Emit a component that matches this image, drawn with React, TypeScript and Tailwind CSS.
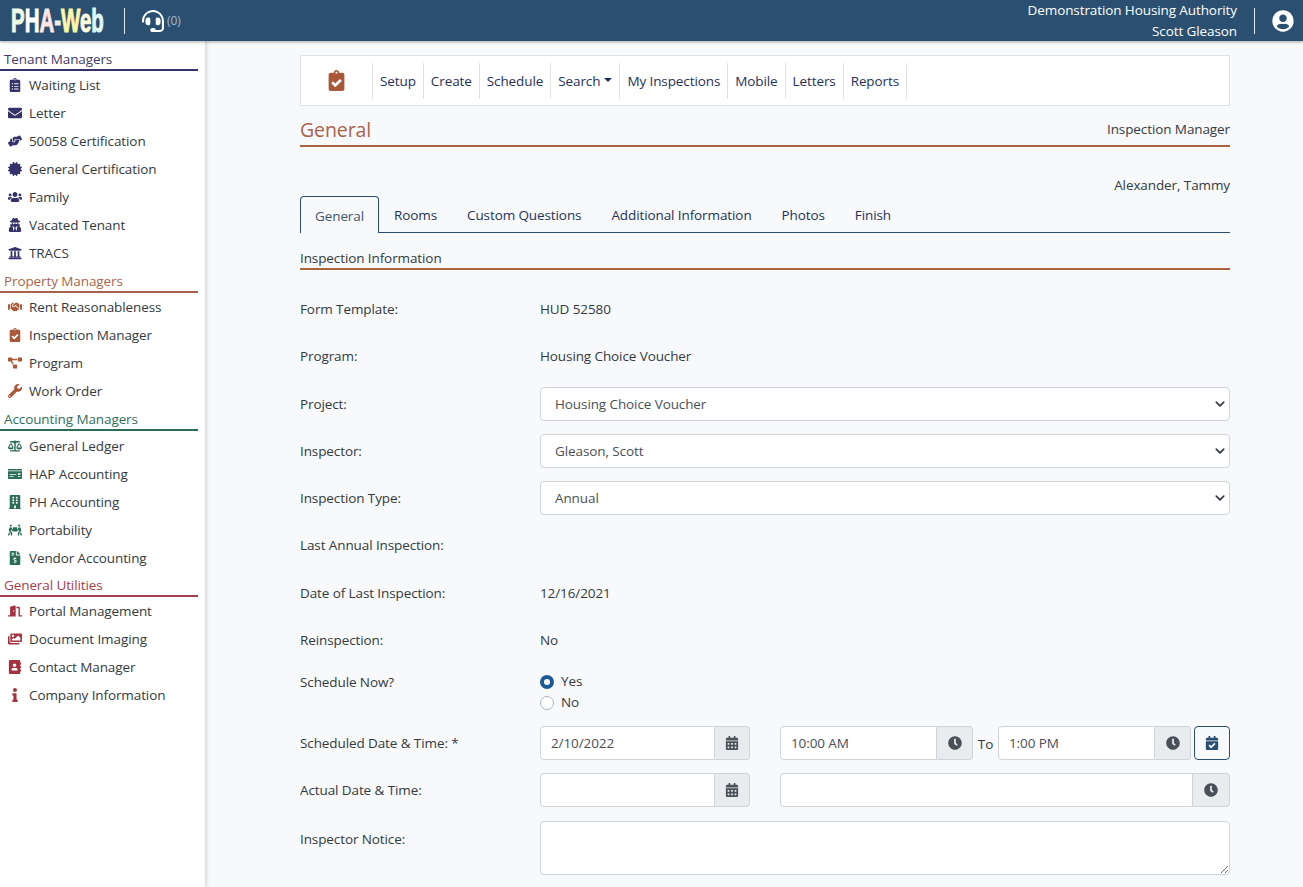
import React from 'react';
import {
  FaAddressBook,
  FaBalanceScale,
  FaBuilding,
  FaCalendarAlt,
  FaCalendarCheck,
  FaCertificate,
  FaClipboardCheck,
  FaClipboardList,
  FaClock,
  FaDoorOpen,
  FaEnvelope,
  FaFileInvoiceDollar,
  FaHandshake,
  FaHandsHelping,
  FaHeadset,
  FaImages,
  FaInfo,
  FaMoneyCheck,
  FaPeopleCarry,
  FaProjectDiagram,
  FaUniversity,
  FaUserCircle,
  FaUserSecret,
  FaUsers,
  FaWrench,
} from 'react-icons/fa';

const sections = [
  {
    title: 'Tenant Managers',
    titleClass: 'text-[#3f3a6b]',
    lineClass: 'border-[#35316a]',
    iconClass: 'text-[#35316a]',
    listClass: 'pb-[5px]',
    items: [
      { label: 'Waiting List', icon: FaClipboardList },
      { label: 'Letter', icon: FaEnvelope },
      { label: '50058 Certification', icon: FaHandsHelping },
      { label: 'General Certification', icon: FaCertificate },
      { label: 'Family', icon: FaUsers },
      { label: 'Vacated Tenant', icon: FaUserSecret },
      { label: 'TRACS', icon: FaUniversity },
    ],
  },
  {
    title: 'Property Managers',
    titleClass: 'text-[#a9634a]',
    lineClass: 'border-[#a9634a]',
    iconClass: 'text-[#a9583a]',
    listClass: 'pb-[5px]',
    items: [
      { label: 'Rent Reasonableness', icon: FaHandshake },
      { label: 'Inspection Manager', icon: FaClipboardCheck },
      { label: 'Program', icon: FaProjectDiagram },
      { label: 'Work Order', icon: FaWrench },
    ],
  },
  {
    title: 'Accounting Managers',
    titleClass: 'text-[#2f6f5c]',
    lineClass: 'border-[#2b6e58]',
    iconClass: 'text-[#2b6e58]',
    listClass: 'pt-[1px] pb-[4px]',
    items: [
      { label: 'General Ledger', icon: FaBalanceScale },
      { label: 'HAP Accounting', icon: FaMoneyCheck },
      { label: 'PH Accounting', icon: FaBuilding },
      { label: 'Portability', icon: FaPeopleCarry },
      { label: 'Vendor Accounting', icon: FaFileInvoiceDollar },
    ],
  },
  {
    title: 'General Utilities',
    titleClass: 'text-[#a03f4b]',
    lineClass: 'border-[#a03f4b]',
    iconClass: 'text-[#a5323f]',
    listClass: '',
    items: [
      { label: 'Portal Management', icon: FaDoorOpen },
      { label: 'Document Imaging', icon: FaImages },
      { label: 'Contact Manager', icon: FaAddressBook },
      { label: 'Company Information', icon: FaInfo },
    ],
  },
];

const logoLetters = [
  { ch: 'P', cls: 'text-[#ecffe4]' },
  { ch: 'H', cls: 'text-white' },
  { ch: 'A', cls: 'text-[#ffe6e6]' },
  { ch: '-', cls: 'text-[#eeeeee]' },
  { ch: 'W', cls: 'text-[#fff7a8]' },
  { ch: 'e', cls: 'text-[#fffde0]' },
  { ch: 'b', cls: 'text-[#dffbff]' },
];

const inputClass =
  'h-[34px] min-w-0 flex-1 rounded-l-[4px] border border-[#ced4da] bg-white px-[10px] text-[13.5px] text-[#495057]';

function Select({ value }: { value: string }) {
  return (
    <div className="flex h-[34px] items-center justify-between rounded-[4px] border border-[#ced4da] bg-white pl-[14px] pr-[4px] text-[#495057]">
      <span>{value}</span>
      <svg width="10" height="10" viewBox="0 0 16 16">
        <path d="M2 5l6 6 6-6" fill="none" stroke="#343a40" strokeWidth="2.6" strokeLinecap="round" strokeLinejoin="round" />
      </svg>
    </div>
  );
}

function Addon({ clock, width }: { clock?: boolean; width: string }) {
  return (
    <div className={`flex h-[34px] items-center justify-center rounded-r-[4px] border border-l-0 border-[#ced4da] bg-[#e9ecef] text-[#495057] ${width}`}>
      {clock ? <FaClock className="h-[14px] w-auto" /> : <FaCalendarAlt className="h-[14px] w-auto" />}
    </div>
  );
}

function Row({ label, height, labelClass, children }: { label: string; height: string; labelClass?: string; children?: React.ReactNode }) {
  return (
    <div className={`flex ${height}`}>
      <div className={`w-[240px] shrink-0 text-[#343a40] ${labelClass ?? ''}`}>{label}</div>
      <div className="min-w-0 flex-1">{children}</div>
    </div>
  );
}

export default function App() {
  return (
    <div className="flex h-[887px] flex-col overflow-hidden bg-[#f7f9fb] font-['Open_Sans',sans-serif] text-[13.5px] tracking-[-0.1px] text-[#343a40]">
      {/* Header */}
      <header className="z-10 flex h-[41px] shrink-0 items-center bg-[#2a4f70] shadow-[0_1px_3px_rgba(0,0,0,0.35)]">
        <div className="ml-[11px] w-[95px]">
          <div className="origin-left scale-x-[0.62] whitespace-nowrap font-['Liberation_Sans',sans-serif] text-[33px] leading-[41px] font-bold tracking-normal [-webkit-text-stroke:1px_currentColor]">
            {logoLetters.map((l) => (
              <span key={l.ch} className={l.cls}>{l.ch}</span>
            ))}
          </div>
        </div>
        <div className="ml-[18px] h-[26px] border-l border-[#dfe6ec]" />
        <FaHeadset className="ml-[17px] text-[22px] text-white" />
        <span className="ml-[3px] text-[12px] text-[#a9b8c6]">(0)</span>
        <div className="ml-auto text-right leading-[21px] text-white">
          <div>Demonstration Housing Authority</div>
          <div>Scott Gleason</div>
        </div>
        <div className="ml-[17px] h-[26px] border-l border-[#dfe6ec]" />
        <FaUserCircle className="ml-[17px] mr-[9px] text-[22px] text-white" />
      </header>

      <div className="flex min-h-0 flex-1">
        {/* Sidebar */}
        <aside className="w-[206px] shrink-0 border-r border-[#dcdfe3] bg-white pt-[9px] shadow-[1px_0_3px_rgba(0,0,0,0.12)]">
          {sections.map((section) => (
            <div key={section.title} className="w-[198px]">
              <div className={`h-[21px] border-b-2 pl-[4px] leading-[18px] ${section.titleClass} ${section.lineClass}`}>
                {section.title}
              </div>
              <div className={section.listClass}>
                {section.items.map((item) => (
                  <div key={item.label} className="flex h-[28px] items-center text-[#343a40]">
                    <div className="flex w-[29px] shrink-0 justify-center">
                      <item.icon className={`h-[14px] w-auto ${section.iconClass}`} />
                    </div>
                    <span className="whitespace-nowrap">{item.label}</span>
                  </div>
                ))}
              </div>
            </div>
          ))}
        </aside>

        {/* Main */}
        <main className="min-w-0 flex-1 pl-[94px] pr-[73px] pt-[14px]">
          <nav className="flex h-[51px] items-center border border-[#dee2e6] bg-white">
            <div className="flex w-[71px] justify-center">
              <FaClipboardCheck className="h-[21px] w-auto text-[#a9583a]" />
            </div>
            {['Setup', 'Create', 'Schedule', 'Search', 'My Inspections', 'Mobile', 'Letters', 'Reports'].map((t) => (
              <div key={t} className="flex h-[36px] items-center border-l border-[#dee2e6] px-[7px] pt-[1px] text-[#1f3158] last:border-r">
                {t}
                {t === 'Search' && <span className="ml-[4px] mb-[2px] border-x-[4px] border-t-[4px] border-x-transparent border-t-[#1f3158]" />}
              </div>
            ))}
          </nav>

          <div className="mt-[10px] flex h-[31px] items-center justify-between border-b-2 border-[#a9633f] pb-[2px]">
            <span className="text-[19.5px] text-[#a9634a]">General</span>
            <span>Inspection Manager</span>
          </div>

          <div className="mt-[29px] text-right leading-[18px]">Alexander, Tammy</div>

          <div className="mt-[2px] flex h-[37px] border-b border-[#2a4f70] text-[#1f3158]">
            <div className="flex h-[37px] items-center rounded-t-[4px] border border-b-0 border-[#2a4f70] bg-[#f7f9fb] px-[14px] pt-[2px] text-[#3a5570]">General</div>
            {['Rooms', 'Custom Questions', 'Additional Information', 'Photos', 'Finish'].map((t) => (
              <div key={t} className="flex items-center px-[15px] pt-[2px]">{t}</div>
            ))}
          </div>

          <div className="mt-[16px] h-[21px] border-b-2 border-[#a9633f] leading-[18px]">Inspection Information</div>

          <div className="mt-[29px] flex flex-col">
            <Row label="Form Template:" height="h-[47px]">HUD 52580</Row>
            <Row label="Program:" height="h-[41px]">Housing Choice Voucher</Row>
            <div className="mb-[13px]">
              <Row label="Project:" height="h-[34px] items-center"><Select value="Housing Choice Voucher" /></Row>
            </div>
            <div className="mb-[13px]">
              <Row label="Inspector:" height="h-[34px] items-center"><Select value="Gleason, Scott" /></Row>
            </div>
            <div className="mb-[20px]">
              <Row label="Inspection Type:" height="h-[34px] items-center"><Select value="Annual" /></Row>
            </div>
            <Row label="Last Annual Inspection:" height="h-[48px]" />
            <Row label="Date of Last Inspection:" height="h-[47px]">12/16/2021</Row>
            <Row label="Reinspection:" height="h-[42px]">No</Row>
            <Row label="Schedule Now?" height="h-[54px]">
              <div className="-mt-[1px] flex h-[21px] items-center">
                <span className="mr-[7px] h-[14px] w-[14px] rounded-full border-[4px] border-[#1c5a96] bg-white" />
                Yes
              </div>
              <div className="flex h-[21px] items-center">
                <span className="mr-[7px] h-[14px] w-[14px] rounded-full border border-[#adb5bd] bg-white" />
                No
              </div>
            </Row>
            <div className="mb-[13px]">
              <Row label="Scheduled Date & Time: *" height="h-[34px] items-center">
                <div className="flex items-center">
                  <div className="flex w-[210px]">
                    <input className={inputClass} readOnly value="2/10/2022" />
                    <Addon width="w-[35px]" />
                  </div>
                  <div className="ml-[30px] flex w-[193px]">
                    <input className={inputClass} readOnly value="10:00 AM" />
                    <Addon clock width="w-[36px]" />
                  </div>
                  <span className="w-[25px] pt-[2px] text-center">To</span>
                  <div className="flex w-[193px]">
                    <input className={inputClass} readOnly value="1:00 PM" />
                    <Addon clock width="w-[36px]" />
                  </div>
                  <div className="ml-[3px] flex h-[34px] w-[36px] items-center justify-center rounded-[4px] border border-[#2a4f70] text-[#2a4f70]">
                    <FaCalendarCheck className="h-[14px] w-auto" />
                  </div>
                </div>
              </Row>
            </div>
            <div className="mb-[14px]">
              <Row label="Actual Date & Time:" height="h-[34px] items-center">
                <div className="flex items-center">
                  <div className="flex w-[210px]">
                    <input className={inputClass} readOnly />
                    <Addon width="w-[35px]" />
                  </div>
                  <div className="ml-[30px] flex flex-1">
                    <input className={inputClass} readOnly />
                    <Addon clock width="w-[37px]" />
                  </div>
                </div>
              </Row>
            </div>
            <Row label="Inspector Notice:" height="h-[54px]" labelClass="pt-[8px]">
              <textarea className="block h-[54px] w-full rounded-[4px] border border-[#ced4da] bg-white" readOnly />
            </Row>
          </div>
        </main>
      </div>
    </div>
  );
}
